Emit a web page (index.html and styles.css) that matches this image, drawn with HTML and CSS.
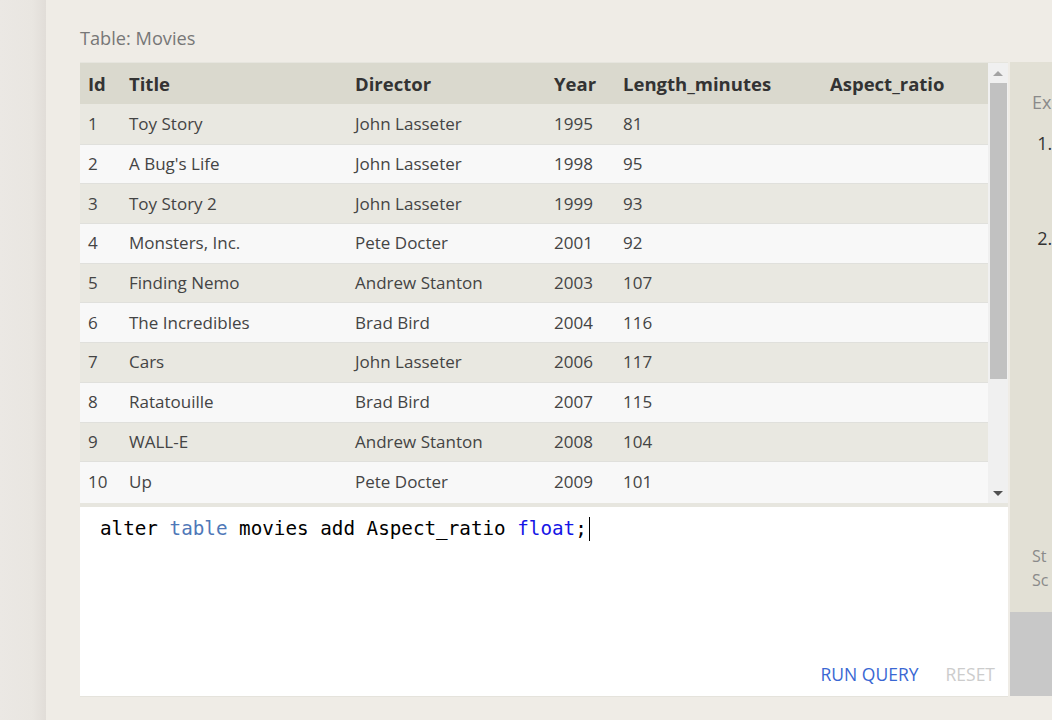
FILE: index.html
```html
<!DOCTYPE html>
<html>
<head>
<meta charset="utf-8">
<link rel="stylesheet" href="styles.css">
</head>
<body>
<div class="page">
  <div class="sidebar"></div>
  <div class="main">
    <div class="title">Table: Movies</div>
    <div class="workspace">
      <div class="left">
        <div class="table-wrap">
          <div class="table-scroll">
            <table class="grid">
              <thead>
                <tr><th class="c-id">Id</th><th class="c-title">Title</th><th class="c-dir">Director</th><th class="c-year">Year</th><th class="c-len">Length_minutes</th><th class="c-asp">Aspect_ratio</th></tr>
              </thead>
              <tbody>
                <tr><td>1</td><td>Toy Story</td><td>John Lasseter</td><td>1995</td><td>81</td><td></td></tr>
                <tr><td>2</td><td>A Bug's Life</td><td>John Lasseter</td><td>1998</td><td>95</td><td></td></tr>
                <tr><td>3</td><td>Toy Story 2</td><td>John Lasseter</td><td>1999</td><td>93</td><td></td></tr>
                <tr><td>4</td><td>Monsters, Inc.</td><td>Pete Docter</td><td>2001</td><td>92</td><td></td></tr>
                <tr><td>5</td><td>Finding Nemo</td><td>Andrew Stanton</td><td>2003</td><td>107</td><td></td></tr>
                <tr><td>6</td><td>The Incredibles</td><td>Brad Bird</td><td>2004</td><td>116</td><td></td></tr>
                <tr><td>7</td><td>Cars</td><td>John Lasseter</td><td>2006</td><td>117</td><td></td></tr>
                <tr><td>8</td><td>Ratatouille</td><td>Brad Bird</td><td>2007</td><td>115</td><td></td></tr>
                <tr><td>9</td><td>WALL-E</td><td>Andrew Stanton</td><td>2008</td><td>104</td><td></td></tr>
                <tr><td>10</td><td>Up</td><td>Pete Docter</td><td>2009</td><td>101</td><td></td></tr>
              </tbody>
            </table>
          </div>
          <div class="scrollbar">
            <div class="arrow up"></div>
            <div class="thumb"></div>
            <div class="track-rest"></div>
            <div class="arrow down"></div>
          </div>
        </div>
        <div class="editor">
          <div class="code"><span>alter </span><span class="kw">table</span><span> movies add Aspect_ratio </span><span class="type">float</span><span>;</span><span class="cursor"></span></div>
          <div class="actions">
            <span class="run">RUN QUERY</span>
            <span class="reset">RESET</span>
          </div>
        </div>
      </div>
      <div class="panel">
        <div class="panel-body">
          <div class="ex">Ex</div>
          <ol class="tasks">
            <li class="t1"></li>
            <li class="t2"></li>
          </ol>
          <div class="status">St<br>Sc</div>
        </div>
        <div class="panel-box"></div>
      </div>
    </div>
  </div>
</div>
</body>
</html>
```

FILE: styles.css
```css
html, body {
  margin: 0;
  padding: 0;
  width: 1052px;
  height: 720px;
  overflow: hidden;
  background: #efece6;
  font-family: "Open Sans", "Noto Sans", sans-serif;
}

.page {
  display: flex;
  height: 720px;
}

.sidebar {
  width: 46px;
  flex: none;
  background: linear-gradient(to right, #ebe8e4 0, #e9e6e1 70%, #e1ddd8 100%);
}

.main {
  flex: 1;
  padding-left: 34px;
  min-width: 0;
}

.title {
  padding-top: 26px;
  margin-bottom: 12px;
  font-size: 18.2px;
  line-height: 24px;
  color: #777777;
}

.workspace {
  display: flex;
}

.left {
  width: 928px;
  flex: none;
  display: flex;
  flex-direction: column;
}

.table-wrap {
  display: flex;
  border-top: 1px solid #e6e5de;
  box-sizing: border-box;
  border-bottom: 4px solid #e7e6df;
  height: 445px;
}

.table-scroll {
  flex: 1;
  overflow: hidden;
  background: #f8f8f8;
}

.grid {
  border-collapse: separate;
  border-spacing: 0;
  width: 908px;
  table-layout: fixed;
}

.grid th {
  background: #dad9ce;
  color: #333333;
  font-weight: 700;
  font-size: 18.5px;
  text-align: left;
  height: 41px;
  padding: 0 0 0 8px;
  box-sizing: border-box;
  white-space: nowrap;
}

.c-id { width: 41px; }
.c-title { width: 226px; }
.c-dir { width: 199px; }
.c-year { width: 69px; }
.c-len { width: 207px; }

.grid td {
  font-size: 17px;
  color: #444444;
  height: 39.7px;
  padding: 0 0 1px 8px;
  box-sizing: border-box;
  border-top: 1px solid #e0e0dc;
  white-space: nowrap;
}

.grid tbody tr:nth-child(odd) td { background: #e9e8e1; }
.grid tbody tr:nth-child(even) td { background: #f8f8f8; }
.grid tbody tr:first-child td { border-top: none; }

.scrollbar {
  width: 20px;
  flex: none;
  background: #f0f0f0;
  display: flex;
  flex-direction: column;
  align-items: center;
}

.arrow {
  height: 20px;
  flex: none;
  display: flex;
  align-items: center;
  justify-content: center;
  width: 100%;
}

.arrow.up::before {
  content: "";
  border-left: 5px solid transparent;
  border-right: 5px solid transparent;
  border-bottom: 5px solid #a3a3a3;
}

.arrow.down::before {
  content: "";
  border-left: 5px solid transparent;
  border-right: 5px solid transparent;
  border-top: 5px solid #505050;
}

.thumb {
  width: 17px;
  height: 296px;
  background: #c1c1c1;
  flex: none;
  margin-left: 1px;
}

.track-rest { flex: 1; }

.editor {
  background: #ffffff;
  height: 190px;
  box-sizing: border-box;
  display: flex;
  flex-direction: column;
  justify-content: space-between;
  border-bottom: 1px solid #e5e3dc;
}

.code {
  font-family: "DejaVu Sans Mono", "Liberation Mono", monospace;
  font-size: 19.25px;
  color: #000000;
  padding: 9px 0 0 20px;
  line-height: 26px;
  white-space: pre;
  display: flex;
  align-items: center;
}

.kw { color: #4f78b8; }
.type { color: #1515e6; }

.cursor {
  display: inline-block;
  width: 1px;
  height: 24px;
  background: #000;
  margin-left: 2px;
}

.actions {
  display: flex;
  justify-content: flex-end;
  gap: 27px;
  padding: 0 13px 10px 0;
  font-size: 17.5px;
  line-height: 24px;
}

.run { color: #3a67d3; }
.reset { color: #cccccc; }

.panel {
  width: 42px;
  flex: none;
  margin-left: 2px;
  display: flex;
  flex-direction: column;
  height: 634px;
}

.panel-body {
  flex: 1;
  background: #e2e0d5;
  padding: 27px 0 0 22px;
  box-sizing: border-box;
  white-space: nowrap;
}

.ex {
  font-size: 18px;
  color: #8a8a8a;
  line-height: 26px;
}

.tasks {
  margin: 16px 0 0 0;
  padding-left: 25px;
  color: #333333;
  font-size: 18px;
  line-height: 24px;
}

.tasks li { height: 24px; }
.tasks .t1 { height: 95px; }

.status {
  margin-top: 294px;
  font-size: 16px;
  line-height: 24px;
  color: #8a8a8a;
}

.panel-box {
  height: 84px;
  background: #c8c8c8;
  flex: none;
}
```
